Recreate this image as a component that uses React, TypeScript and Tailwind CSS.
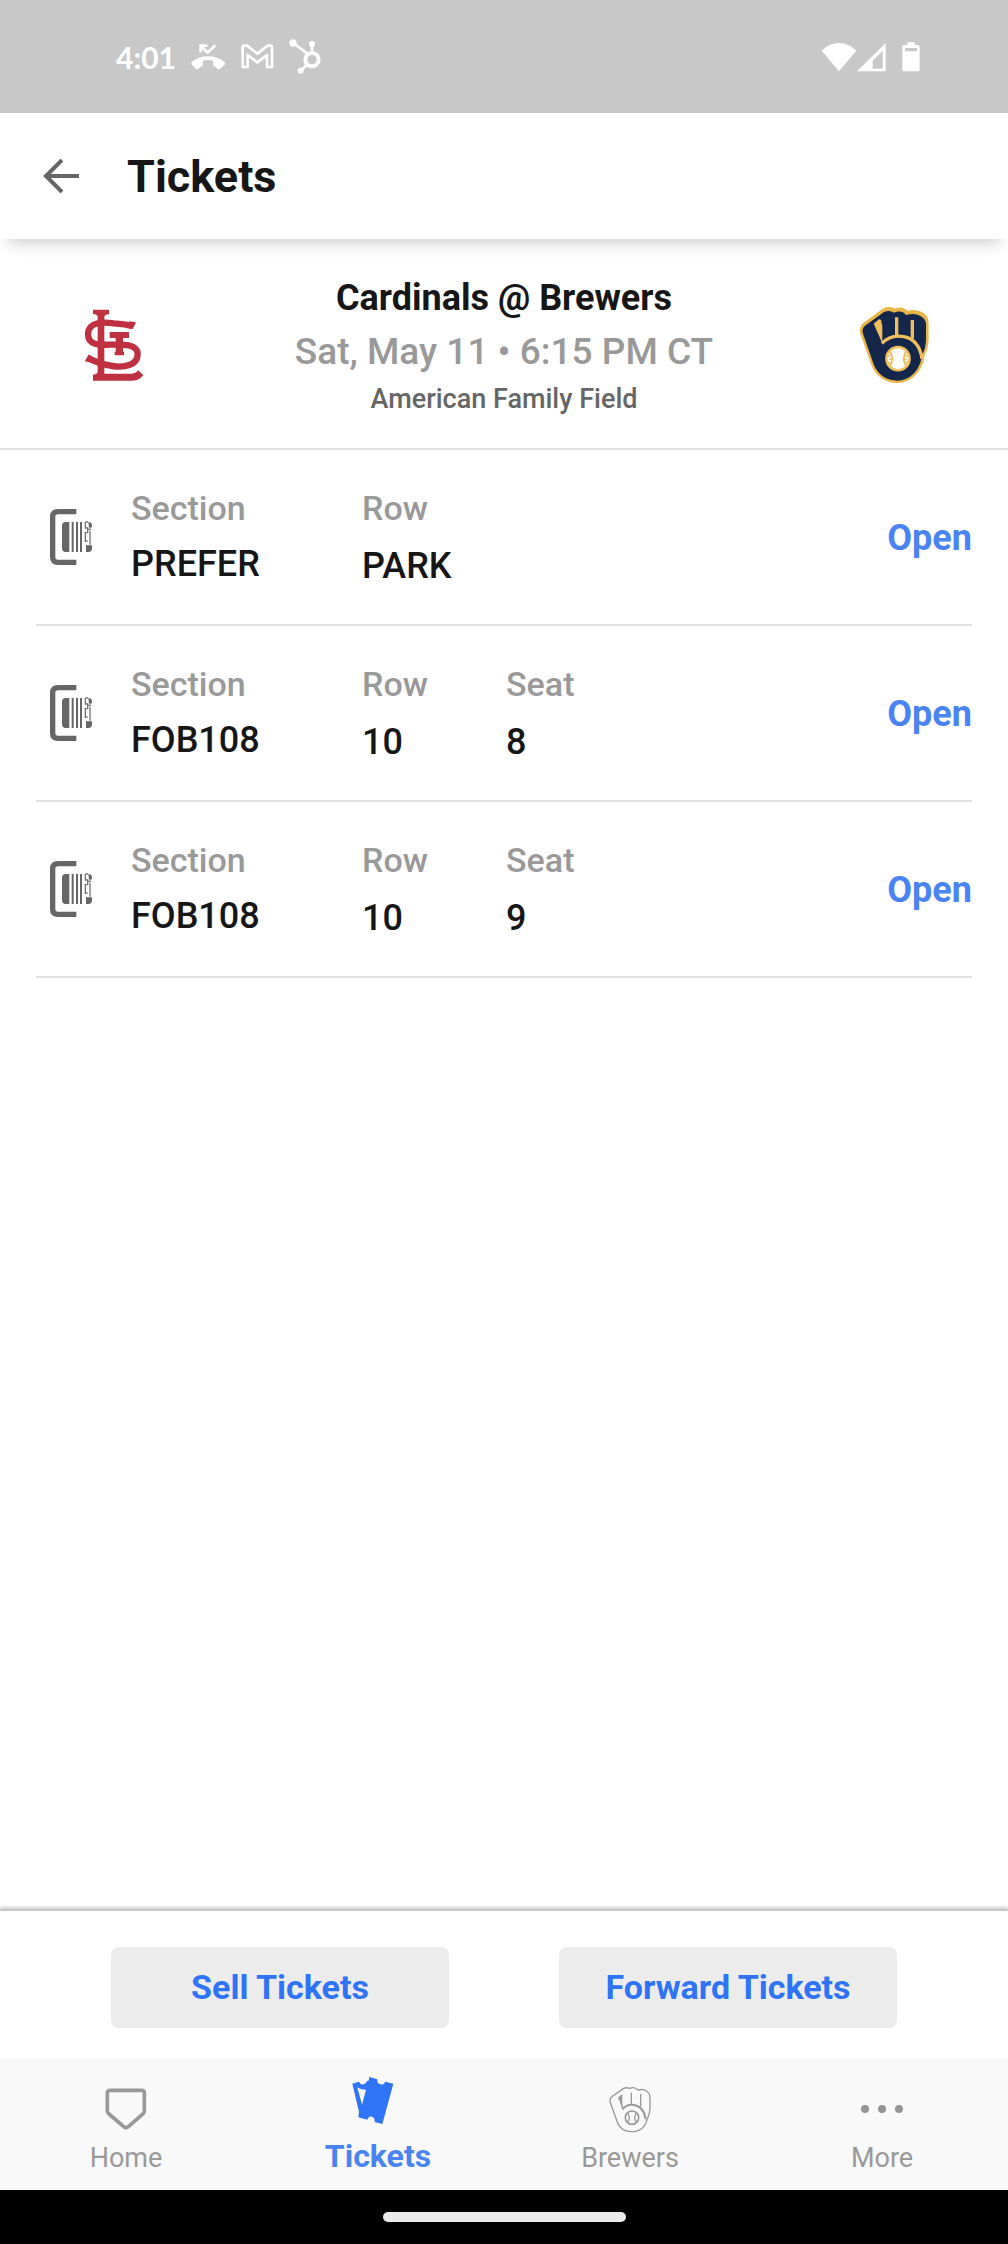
import { useState } from "react";

type Ticket = {
  id: number;
  section: string;
  row: string;
  seat?: string;
};

const tickets: Ticket[] = [
  { id: 1, section: "PREFER", row: "PARK" },
  { id: 2, section: "FOB108", row: "10", seat: "8" },
  { id: 3, section: "FOB108", row: "10", seat: "9" },
];

function MissedCallIcon() {
  return (
    <svg className="h-[27px] w-[35px]" viewBox="300 73 105 81" fill="none" aria-hidden="true">
      <path d="M329 101V81h20M331 83l19 19 23-22" stroke="#fff" strokeWidth="8" />
      <path
        d="M301 135q0-4 4-7 20-15 46-15t47 15q4 3 4 7l-1 3-14 12q-3 3-7 0l-12-9q-2-2-2-5v-10q-15-4-30 0v10q0 3-2 5l-12 9q-4 3-7 0l-13-12z"
        fill="#fff"
      />
    </svg>
  );
}

function MailIcon() {
  return (
    <svg className="h-[25px] w-[33px]" viewBox="452 74 99 75" fill="none" aria-hidden="true">
      <path
        d="M457 84q0-5 5-5h8l31 24 31-24h8q5 0 5 5v59h-15v-36l-29 22-29-22v36h-15z"
        stroke="#fff"
        strokeWidth="8"
        strokeLinejoin="round"
      />
    </svg>
  );
}

function HubIcon() {
  return (
    <svg className="h-[35px] w-[32px]" viewBox="603 61 96 105" fill="none" aria-hidden="true">
      <circle cx="672" cy="123" r="20" stroke="#fff" strokeWidth="12" />
      <path d="M672 100V76M616 73l42 32M656 139l-18 17" stroke="#fff" strokeWidth="8" />
      <circle cx="615" cy="73" r="11" fill="#fff" />
      <circle cx="672" cy="76" r="9" fill="#fff" />
      <circle cx="638" cy="156" r="9" fill="#fff" />
    </svg>
  );
}

function WifiIcon() {
  return (
    <svg className="h-[30px] w-[36px]" viewBox="88 65 108 90" aria-hidden="true">
      <path d="M90 91q22-23 52-23t52 23l-52 62z" fill="#fff" />
    </svg>
  );
}

function SignalIcon() {
  return (
    <svg className="h-[30px] w-[29px]" viewBox="200 65 87 90" aria-hidden="true">
      <path d="M286 68v85h-86zM277 91l-30 30v24h30z" fill="#fff" fillRule="evenodd" />
    </svg>
  );
}

function BatteryIcon() {
  return (
    <svg className="h-[30px] w-[18px]" viewBox="336 65 54 90" aria-hidden="true">
      <path
        d="M352 66h22v8h10q5 0 5 5v69q0 5-5 5h-42q-5 0-5-5V79q0-5 5-5h10zM345 83v10h36V83z"
        fill="#fff"
        fillRule="evenodd"
      />
    </svg>
  );
}

function BackIcon() {
  return (
    <svg className="h-9 w-9" viewBox="0 0 36 36" fill="none" stroke="#666" strokeWidth="4" aria-hidden="true">
      <path d="M36 17H3M19 1 3 17l16 16" />
    </svg>
  );
}

function CardinalsLogo() {
  return (
    <svg className="h-[72px] w-[60px]" viewBox="75 84 180 216" fill="#bf3141" role="img" aria-label="Cardinals">
      <path d="M102 86h48v14q-13 0-14 8v170h82q12 0 19-10l16 14q-11 17-33 17H102v-18q14 0 14-10V108q0-8-14-9z" />
      <path d="M152 153h58v18h-18v40q0 2 3 2v10h-28v-10q3 0 3-2v-40h-18z" />
      <path
        d="M222 135q-24-6-57-8c-34-5-77-4-78 31s34 34 68 33c36-1 81-2 81 28 0 35-42 41-76 36q-42-7-76-25"
        fill="none"
        stroke="#bf3141"
        strokeWidth="19"
      />
      <path d="M211 121l20 3q-5 12-10 20l-16-2zM91 221l13 9-7 14-20-3z" />
    </svg>
  );
}

function BrewersLogo() {
  return (
    <svg className="h-[78px] w-[70px]" viewBox="89 77 210 234" fill="none" role="img" aria-label="Brewers">
      <path
        d="M92 158q-3-18 9-29l57-42q12-9 28-6 8 1 12 4 20-10 37 6 23-5 40 3 23 9 23 34v45q0 30-12 51c-5 49-41 84-82 84-35 0-65-21-77-52z"
        fill="#e9b64a"
      />
      <path
        d="M100 157q-2-14 7-21l56-40q17-9 31 1 24-9 36 7 26-7 42 2 18 9 18 26v43q0 28-12 49c-5 45-36 77-74 77-32 0-58-18-70-46z"
        fill="#14264a"
      />
      <path d="M133 130l14-12q5-3 8 2l4 17v52z" fill="#f0bf5c" />
      <path d="M202 111v56M249 119v56" stroke="#f0bf5c" strokeWidth="10" />
      <path d="M158 189q26-28 66-20 45 9 54 66" stroke="#f0bf5c" strokeWidth="10" />
      <circle cx="206" cy="235" r="35" fill="#fff" stroke="#f0bf5c" strokeWidth="7" />
      <path
        d="M181 211q16 24 0 48M231 211q-16 24 0 48M184 224l-8 4M189 237h-9M184 249l-8-4M227 224l9 4M223 237h9M227 249l9-4"
        stroke="#f0bf5c"
        strokeWidth="5"
      />
    </svg>
  );
}

function ScanIcon() {
  return (
    <svg className="h-14 w-[42px] shrink-0" viewBox="30 29 126 168" fill="none" aria-hidden="true">
      <path d="M109 37H54q-16 0-16 16v120q0 16 16 16h55" stroke="#666" strokeWidth="16" />
      <path d="M88 68v90H77q-11 0-11-12V80q0-12 11-12z" fill="#666" />
      <path d="M98 68v90M111 68v90M123 68v90" stroke="#666" strokeWidth="6" />
      <path d="M136 68v18h7v14h-7v25h7M150 70v17M150 94v42M136 68h8M144 90h9M136 114v14" stroke="#777" strokeWidth="4" />
      <path d="M145 68q11 0 11 12v4h-9zM138 138h18v8q0 12-11 12h-7z" fill="#666" />
    </svg>
  );
}

function HomeIcon() {
  return (
    <svg className="h-12 w-[42px]" viewBox="315 588 126 144" fill="none" aria-hidden="true">
      <path
        d="M331 601h94q8 0 8 8v55q0 4-4 8l-44 38q-7 6-14 0l-44-38q-5-4-5-8v-55q0-8 9-8z"
        stroke="#999"
        strokeWidth="11"
      />
    </svg>
  );
}

function TicketsIcon() {
  return (
    <svg className="mr-[10px] h-[47px] w-[42px]" viewBox="1057 560 126 141" aria-hidden="true">
      <path
        d="M1058 580l20-6q5 11 14 8t10-10l5-1 2-11 24 7q-1 13 9 15 11 3 15-8l24 6-33 121-23-6q2-12-8-16-10-3-14 9l-27-7 2-16zM1073 591l14 52 12-45q-17 0-26-7z"
        fill="#2f73f6"
        fillRule="evenodd"
      />
    </svg>
  );
}

function GloveIcon() {
  return (
    <svg className="h-12 w-[42px]" viewBox="315 588 126 144" fill="none" stroke="#999" strokeWidth="4" aria-hidden="true">
      <path d="M319 638q-4-11 6-19l33-23q8-5 20-1 13-6 24 5 16-4 25 3 11 7 11 20v32q0 17-9 34c-4 22-22 36-46 36-22 0-36-12-42-26z" />
      <path d="M342 623q8-8 13-10v38z" fill="#999" stroke="none" />
      <path d="M356 656l-6-20M382 608v34M410 612v38" />
      <path d="M356 658q12-16 34-13 31 6 35 43" strokeWidth="6" />
      <circle cx="384" cy="683" r="20" strokeWidth="5" />
      <path d="M371 670q10 13 0 26M397 670q-10 13 0 26" />
    </svg>
  );
}

function MoreIcon() {
  return (
    <svg className="h-12 w-[42px]" viewBox="0 0 42 48" fill="#949494" aria-hidden="true">
      <circle cx="4" cy="23" r="4" />
      <circle cx="21" cy="23" r="4" />
      <circle cx="38" cy="23" r="4" />
    </svg>
  );
}

const tabs = [
  { key: "home", label: "Home", Icon: HomeIcon },
  { key: "tickets", label: "Tickets", Icon: TicketsIcon },
  { key: "brewers", label: "Brewers", Icon: GloveIcon },
  { key: "more", label: "More", Icon: MoreIcon },
];

function StatusBar() {
  return (
    <div className="flex h-[113px] items-center justify-between bg-[#c8c8c8] pl-[116px] pr-[88px] text-white">
      <div className="flex items-center gap-[15px]">
        <span className="font-[Lato] text-[30px] leading-8 font-bold">4:01</span>
        <MissedCallIcon />
        <MailIcon />
        <HubIcon />
      </div>
      <div className="flex items-center">
        <WifiIcon />
        <SignalIcon />
        <span className="ml-4">
          <BatteryIcon />
        </span>
      </div>
    </div>
  );
}

function TicketRow({ ticket }: { ticket: Ticket }) {
  return (
    <li className="mx-9 flex items-center border-b-2 border-[#e0e0e0] pl-[14px]">
      <ScanIcon />
      <dl className="flex flex-1 items-start pt-[33px] pb-[25px] pl-[39px] font-medium">
        <div className="w-[231px]">
          <dt className="text-[34px] leading-[50px] text-[#999]">Section</dt>
          <dd className="text-[36px] leading-[62px] text-[#161616]">{ticket.section}</dd>
        </div>
        <div className="w-[144px]">
          <dt className="text-[34px] leading-[50px] text-[#999]">Row</dt>
          <dd className="text-[36px] leading-[66px] text-[#161616]">{ticket.row}</dd>
        </div>
        {ticket.seat && (
          <div>
            <dt className="text-[34px] leading-[50px] text-[#999]">Seat</dt>
            <dd className="text-[36px] leading-[66px] text-[#161616]">{ticket.seat}</dd>
          </div>
        )}
      </dl>
      <button type="button" className="pt-[2px] text-[36px] font-bold text-[#4a83f2]">
        Open
      </button>
    </li>
  );
}

export default function App() {
  const [active, setActive] = useState("tickets");

  return (
    <div className="flex min-h-screen flex-col bg-white font-[Roboto,sans-serif]">
      <StatusBar />

      <header className="flex h-[126px] items-center bg-white pt-[2px] pl-[43px] shadow-[0_12px_14px_-8px_rgba(0,0,0,0.2)]">
        <button type="button" aria-label="Back">
          <BackIcon />
        </button>
        <h1 className="pl-12 text-[45px] font-bold text-[#161616]">Tickets</h1>
      </header>

      <section className="flex items-center justify-between border-b-2 border-[#e0e0e0] pt-8 pb-[29px]">
        <div className="flex w-[228px] justify-center">
          <CardinalsLogo />
        </div>
        <div className="text-center">
          <h2 className="text-[36px] leading-[54px] font-bold text-[#161616]">Cardinals @ Brewers</h2>
          <p className="text-[37px] leading-[54px] font-medium text-[#999]">Sat, May 11 • 6:15 PM CT</p>
          <p className="text-[27px] leading-10 font-medium text-[#666]">American Family Field</p>
        </div>
        <div className="flex w-[228px] justify-center">
          <BrewersLogo />
        </div>
      </section>

      <main className="flex-1">
        <ul>
          {tickets.map((t) => (
            <TicketRow key={t.id} ticket={t} />
          ))}
        </ul>
      </main>

      <div className="flex gap-[110px] border-t-2 border-[#c8c8c8] px-[111px] pt-9 pb-[31px] shadow-[0_-2px_3px_rgba(0,0,0,0.2)]">
        <button type="button" className="h-[81px] flex-1 rounded-lg bg-[#ececec] text-[34px] font-bold text-[#2f73f6]">
          Sell Tickets
        </button>
        <button type="button" className="h-[81px] flex-1 rounded-lg bg-[#ececec] text-[34px] font-bold text-[#2f73f6]">
          Forward Tickets
        </button>
      </div>

      <nav className="grid h-[131px] grid-cols-4 bg-[#f9f9f9]">
        {tabs.map(({ key, label, Icon }) => (
          <button
            key={key}
            type="button"
            onClick={() => setActive(key)}
            className={
              key === active
                ? "flex flex-col items-center justify-end gap-4 pb-[18px] text-[32px] leading-8 font-bold text-[#4a83f2]"
                : "flex flex-col items-center justify-end gap-2 pb-4 text-[27px] leading-8 text-[#999]"
            }
          >
            <Icon />
            {label}
          </button>
        ))}
      </nav>

      <div className="flex h-[54px] items-center justify-center bg-black">
        <div className="h-[10px] w-[243px] rounded-full bg-[#ebebeb]" />
      </div>
    </div>
  );
}
